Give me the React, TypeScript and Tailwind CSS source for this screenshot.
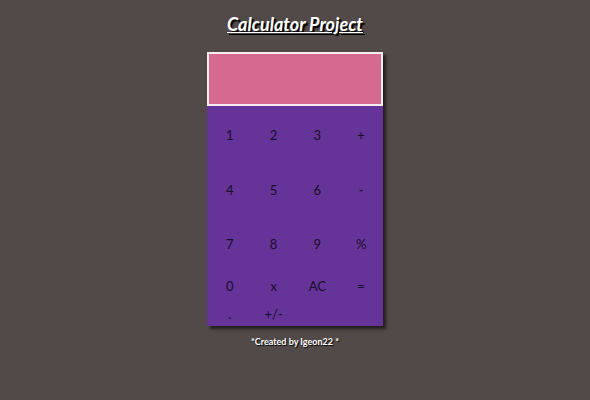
import React from "react";

const keys: string[][] = [
  ["1", "2", "3", "+"],
  ["4", "5", "6", "-"],
  ["7", "8", "9", "%"],
  ["0", "x", "AC", "="],
  [".", "+/-", "", ""],
];

const rowHeights = ["h-[54px]", "h-[55px]", "h-[54px]", "h-[30px]", "h-[26px]"];

export default function App() {
  return (
    <div className="min-h-[400px] w-full bg-[#524a48] flex flex-col items-center font-['Lato','Open_Sans',sans-serif]">
      <h1 className="mt-[12px] text-[18px] font-bold italic underline text-white leading-[24px] [text-shadow:2px_2px_1px_#000]">
        Calculator Project
      </h1>
      <div className="mt-[16px] w-[176px] shadow-[3px_3px_3px_rgba(0,0,0,0.6)]">
        <div className="h-[54px] bg-[#d6698f] border-2 border-[#f4eef0]"></div>
        <div className="h-[220px] bg-[#663399] pt-[3px] pl-[1px]">
          {keys.map((row, i) => (
            <div key={i} className={`grid grid-cols-4 ${rowHeights[i]}`}>
              {row.map((k, j) => (
                <button
                  key={j}
                  className="flex items-center justify-center text-[13px] text-[#160f28]"
                >
                  {k}
                </button>
              ))}
            </div>
          ))}
        </div>
      </div>
      <p className="mt-[9px] text-[9px] font-bold text-white [text-shadow:1px_1px_1px_#000]">
        *Created by Igeon22 *
      </p>
    </div>
  );
}
